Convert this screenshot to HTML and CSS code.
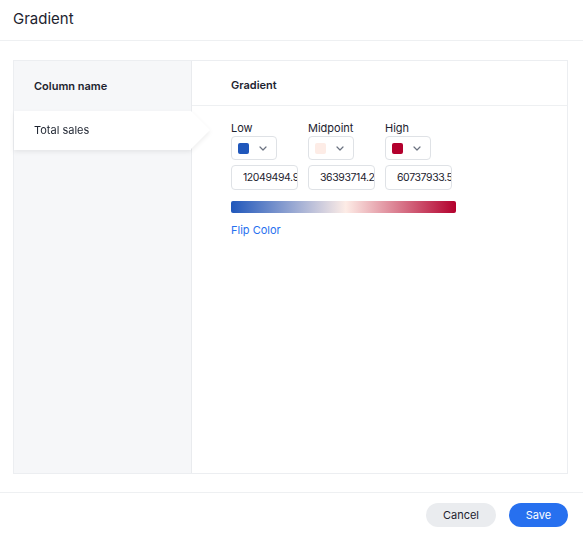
FILE: index.html
```html
<!DOCTYPE html>
<html lang="en">
<head>
    <meta charset="UTF-8">
    <meta name="viewport" content="width=device-width, initial-scale=1.0">
    <title>Gradient</title>
    <link rel="stylesheet" href="styles.css">
</head>
<body>
    <div class="modal">
        <div class="modal-header">Gradient</div>

        <div class="modal-body">
            <div class="panel">
                <!-- Columns -->
                <div class="col-list">
                    <div class="col-head">Column name</div>
                    <div class="col-row selected">Total sales</div>
                </div>

                <!-- Gradient settings -->
                <div class="settings">
                    <div class="settings-head">Gradient</div>
                    <div class="settings-body">
                        <div class="stops">
                            <div class="stop">
                                <div class="stop-label">Low</div>
                                <div class="swatch-select">
                                    <span class="swatch low"></span>
                                    <svg class="chevron" width="8" height="5" viewBox="0 0 8 5"><path d="M1 1l3 3 3-3" fill="none" stroke="#6b7280" stroke-width="1.2" stroke-linecap="round" stroke-linejoin="round"/></svg>
                                </div>
                                <input class="stop-input" type="text" value="12049494.9">
                            </div>
                            <div class="stop">
                                <div class="stop-label">Midpoint</div>
                                <div class="swatch-select">
                                    <span class="swatch mid"></span>
                                    <svg class="chevron" width="8" height="5" viewBox="0 0 8 5"><path d="M1 1l3 3 3-3" fill="none" stroke="#6b7280" stroke-width="1.2" stroke-linecap="round" stroke-linejoin="round"/></svg>
                                </div>
                                <input class="stop-input" type="text" value="36393714.2">
                            </div>
                            <div class="stop">
                                <div class="stop-label">High</div>
                                <div class="swatch-select">
                                    <span class="swatch high"></span>
                                    <svg class="chevron" width="8" height="5" viewBox="0 0 8 5"><path d="M1 1l3 3 3-3" fill="none" stroke="#6b7280" stroke-width="1.2" stroke-linecap="round" stroke-linejoin="round"/></svg>
                                </div>
                                <input class="stop-input" type="text" value="60737933.5">
                            </div>
                        </div>
                        <div class="gradient-bar"></div>
                        <a class="flip-link" href="#">Flip Color</a>
                    </div>
                </div>
            </div>
        </div>

        <div class="modal-footer">
            <button class="btn btn-cancel">Cancel</button>
            <button class="btn btn-save">Save</button>
        </div>
    </div>
</body>
</html>
```

FILE: styles.css
```css
body {
    margin: 0;
    font-family: Inter, "Liberation Sans", sans-serif;
    color: #1d232f;
    background: #fff;
}
.modal {
    width: 583px;
    height: 536px;
    display: flex;
    flex-direction: column;
}
.modal-header {
    height: 41px;
    box-sizing: border-box;
    padding: 10px 13px 0;
    font-size: 15px;
    line-height: 18px;
    border-bottom: 1px solid #eef0f2;
}
.modal-body {
    flex: 1;
    padding: 19px 15px 0 13px;
}
.panel {
    display: flex;
    height: 414px;
    box-sizing: border-box;
    border: 1px solid #eceef1;
}
.col-list {
    width: 177px;
    flex-shrink: 0;
    background: #f6f7f9;
    border-right: 1px solid #e9ebee;
}
.col-head {
    height: 50px;
    box-sizing: border-box;
    padding: 18px 20px 0;
    font-size: 11px;
    line-height: 14px;
    font-weight: 600;
}
.col-row {
    height: 39px;
    box-sizing: border-box;
    padding: 12px 20px 0;
    font-size: 11px;
    line-height: 14px;
}
.col-row.selected {
    position: relative;
    background: #fff;
    filter: drop-shadow(0 2px 2px rgba(0, 0, 0, 0.07));
}
.col-row.selected::after {
    content: "";
    position: absolute;
    left: 100%;
    top: 0;
    border-left: 19px solid #fff;
    border-top: 19.5px solid transparent;
    border-bottom: 19.5px solid transparent;
}
.settings {
    flex: 1;
}
.settings-head {
    height: 45px;
    box-sizing: border-box;
    padding: 17px 39px 0;
    font-size: 11px;
    line-height: 14px;
    font-weight: 600;
    border-bottom: 1px solid #eef0f2;
}
.settings-body {
    padding: 15px 39px 0;
}
.stops {
    display: flex;
    gap: 10px;
}
.stop {
    width: 67px;
}
.stop-label {
    font-size: 11px;
    line-height: 14px;
    margin-bottom: 1px;
}
.swatch-select {
    width: 46px;
    height: 24px;
    box-sizing: border-box;
    border: 1px solid #dfe2e6;
    border-radius: 4px;
    display: flex;
    align-items: center;
    padding-left: 6px;
    gap: 10px;
}
.swatch {
    width: 11px;
    height: 11px;
    border-radius: 2px;
}
.swatch.low { background: #2057bb; }
.swatch.mid { background: #fdece6; }
.swatch.high { background: #b3002d; }
.stop-input {
    display: block;
    margin-top: 5px;
    width: 67px;
    height: 25px;
    box-sizing: border-box;
    border: 1px solid #dfe2e6;
    border-radius: 4px;
    padding: 0 0 0 11px;
    font-family: inherit;
    font-size: 10.5px;
    letter-spacing: -0.4px;
    color: #1d232f;
    outline: none;
}
.gradient-bar {
    margin-top: 11px;
    width: 225px;
    height: 12px;
    border-radius: 2px;
    background: linear-gradient(to right, #2057bb 0%, #fdece6 51%, #b3002d 100%);
}
.flip-link {
    display: inline-block;
    margin-top: 10px;
    font-size: 11px;
    line-height: 14px;
    color: #2770ef;
    text-decoration: none;
}
.modal-footer {
    height: 44px;
    box-sizing: border-box;
    margin-top: 18px;
    border-top: 1px solid #eef0f2;
    display: flex;
    justify-content: flex-end;
    align-items: center;
    gap: 13px;
    padding: 0 15px 0 0;
}
.btn {
    height: 24px;
    border: none;
    border-radius: 12px;
    font-family: inherit;
    font-size: 11px;
    cursor: pointer;
}
.btn-cancel {
    width: 70px;
    background: #eaecef;
    color: #1d232f;
}
.btn-save {
    width: 59px;
    background: #2770ef;
    color: #fff;
}
```
